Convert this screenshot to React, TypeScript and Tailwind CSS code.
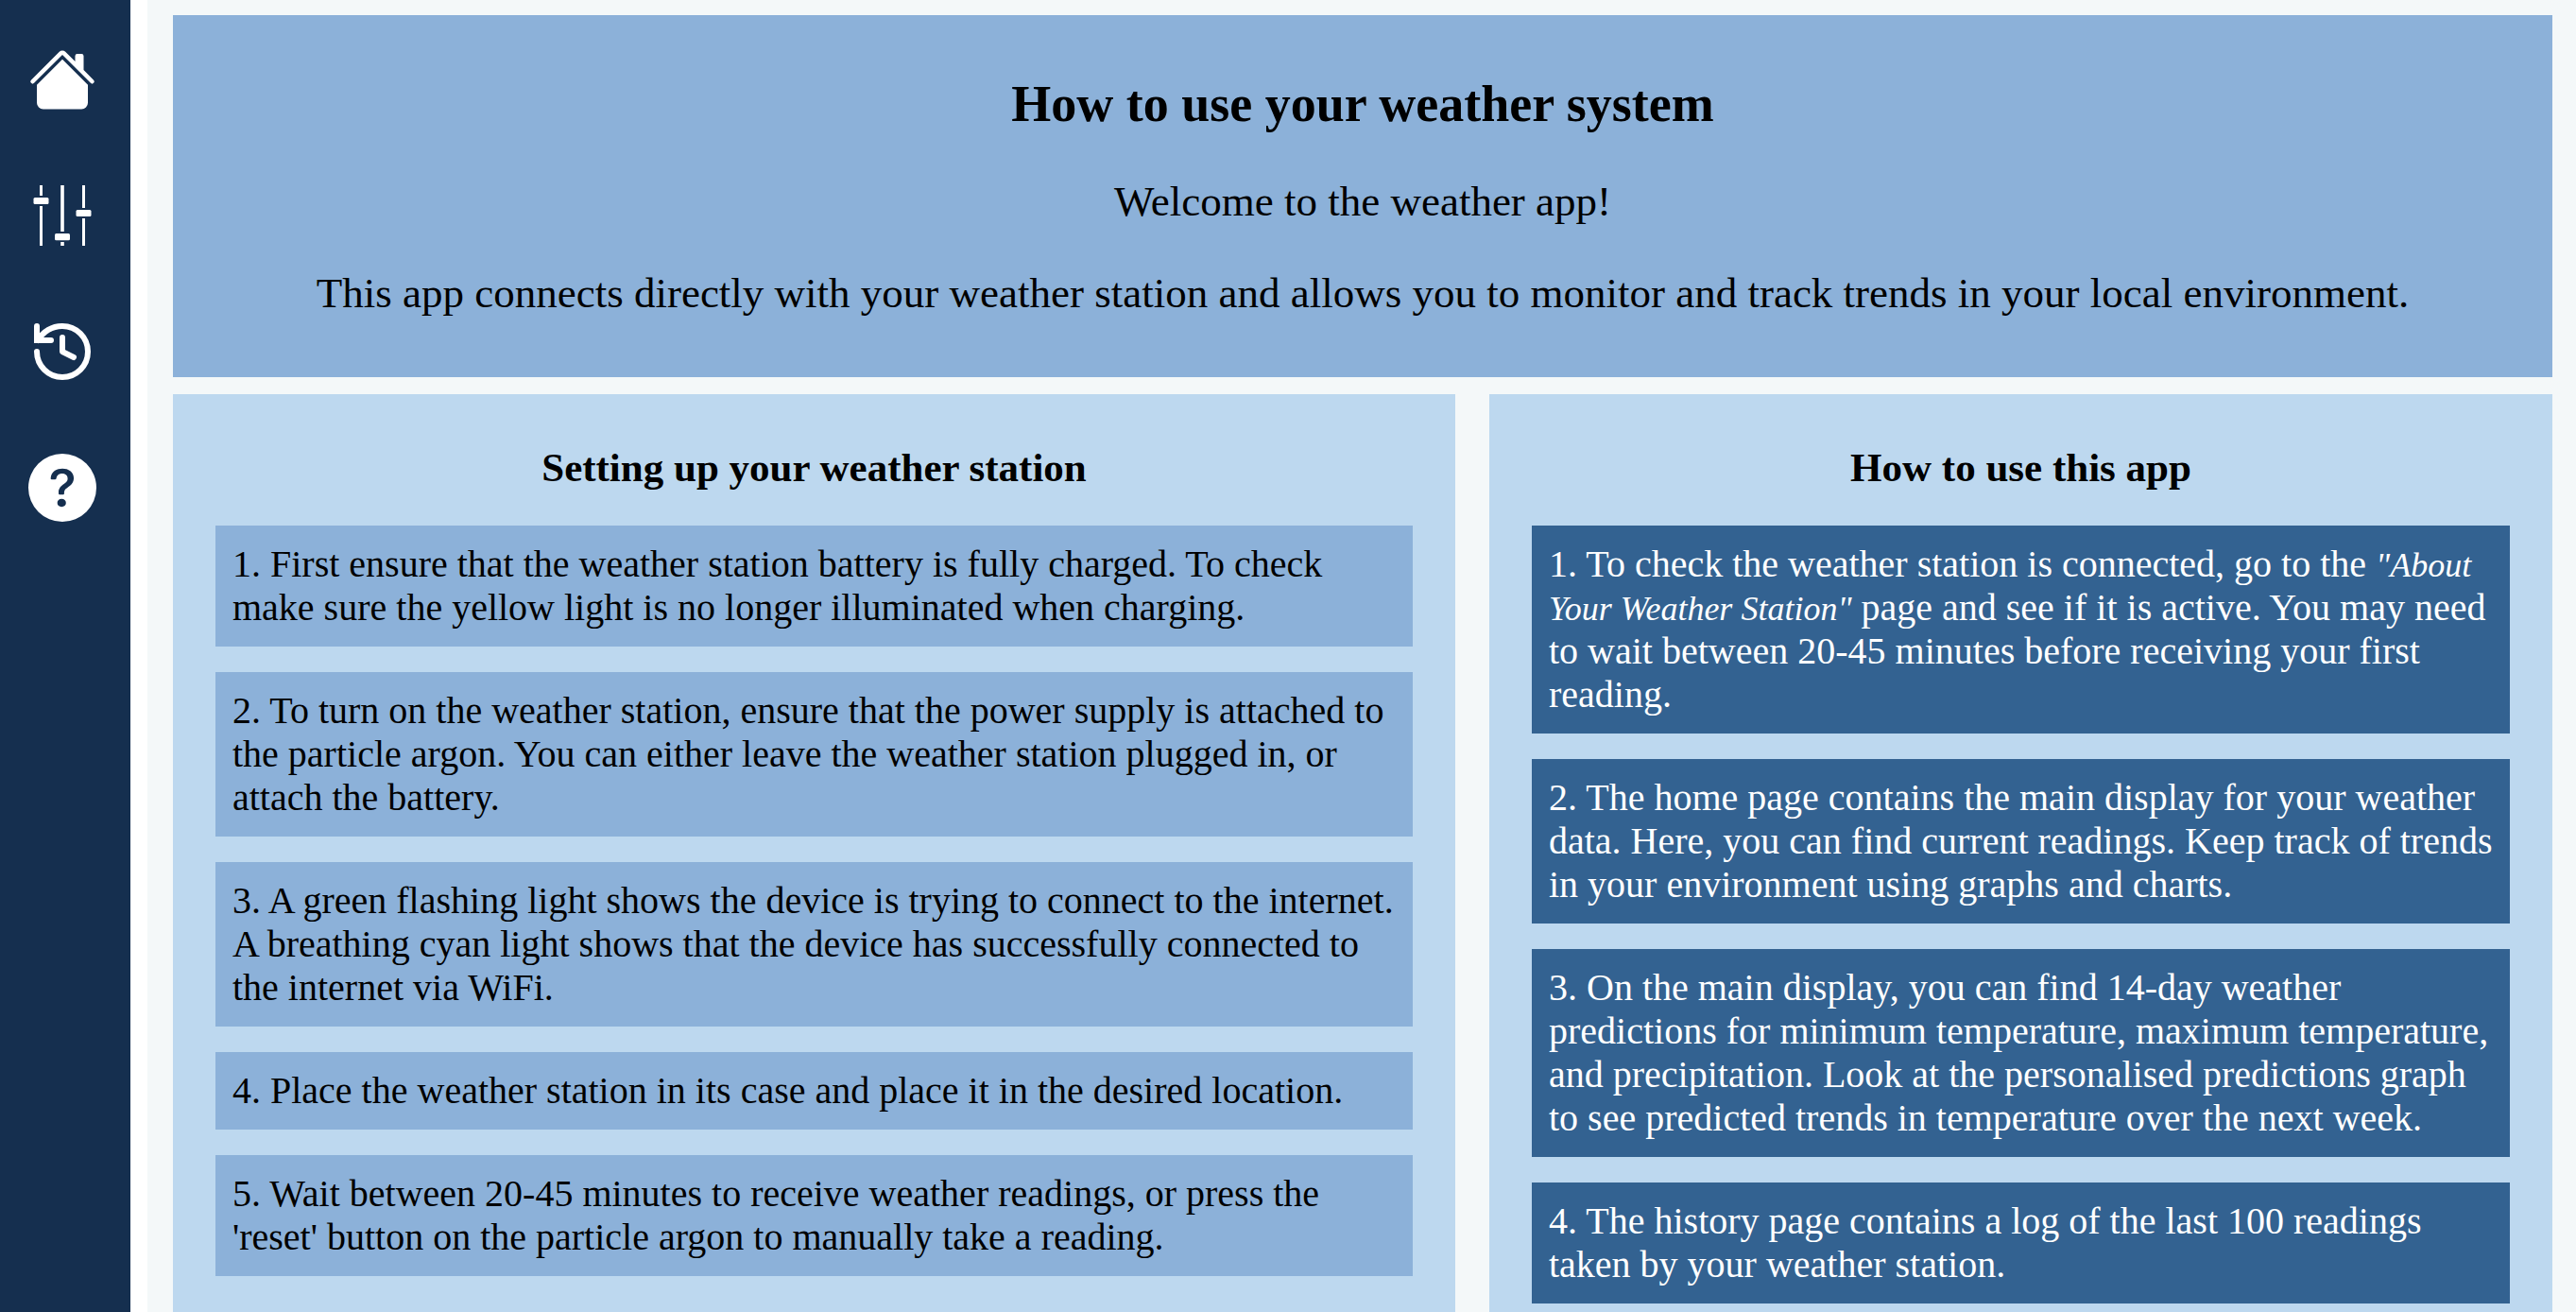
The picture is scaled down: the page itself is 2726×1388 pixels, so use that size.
import type { ReactNode } from "react";
import { BsHouseFill, BsQuestionCircleFill } from "react-icons/bs";

function SlidersIcon() {
  return (
    <svg viewBox="0 0 72 72" className="size-[72px]" fill="currentColor" aria-hidden="true">
      <rect x="12" y="4" width="3" height="11" />
      <rect x="5.5" y="17" width="16" height="7" rx="1.5" />
      <rect x="12" y="26" width="3" height="42" />
      <rect x="34.2" y="4" width="3.6" height="49" />
      <rect x="28" y="55" width="16" height="7.2" rx="1.5" />
      <rect x="34.2" y="64" width="3.6" height="4" />
      <rect x="57" y="4" width="3" height="24" />
      <rect x="50.5" y="30" width="16" height="7" rx="1.5" />
      <rect x="57" y="39" width="3" height="29" />
    </svg>
  );
}

function HistoryIcon() {
  return (
    <svg
      viewBox="0 0 24 24"
      className="size-[72px]"
      fill="none"
      stroke="currentColor"
      strokeWidth="2"
      strokeLinecap="round"
      aria-hidden="true"
    >
      <path d="M12 7v5l4 2" strokeLinejoin="round" />
      <path d="M3 12a9 9 0 1 0 9-9 9.5 9.5 0 0 0-8.5 5" />
      <path d="M3 3v5h5" />
    </svg>
  );
}

const links: { label: string; icon: ReactNode }[] = [
  { label: "Home", icon: <BsHouseFill className="size-[72px]" aria-hidden="true" /> },
  { label: "Settings", icon: <SlidersIcon /> },
  { label: "History", icon: <HistoryIcon /> },
  { label: "Help", icon: <BsQuestionCircleFill className="size-[72px]" aria-hidden="true" /> },
];

const setupSteps: ReactNode[] = [
  "1. First ensure that the weather station battery is fully charged. To check make sure the yellow light is no longer illuminated when charging.",
  "2. To turn on the weather station, ensure that the power supply is attached to the particle argon. You can either leave the weather station plugged in, or attach the battery.",
  "3. A green flashing light shows the device is trying to connect to the internet. A breathing cyan light shows that the device has successfully connected to the internet via WiFi.",
  "4. Place the weather station in its case and place it in the desired location.",
  "5. Wait between 20-45 minutes to receive weather readings, or press the 'reset' button on the particle argon to manually take a reading.",
];

const usageSteps: ReactNode[] = [
  <>
    1. To check the weather station is connected, go to the{" "}
    <em className="text-[36px] leading-none">"About Your Weather Station"</em> page and see if it is
    active. You may need to wait between 20-45 minutes before receiving your first reading.
  </>,
  "2. The home page contains the main display for your weather data. Here, you can find current readings. Keep track of trends in your environment using graphs and charts.",
  "3. On the main display, you can find 14-day weather predictions for minimum temperature, maximum temperature, and precipitation. Look at the personalised predictions graph to see predicted trends in temperature over the next week.",
  "4. The history page contains a log of the last 100 readings taken by your weather station.",
];

function StepPanel({ title, steps, itemClass }: { title: string; steps: ReactNode[]; itemClass: string }) {
  return (
    <section className="bg-[#bdd8ef] px-[45px] pt-[53px] pb-[45px]">
      <h2 className="text-center text-[43px] leading-[50px] font-bold">{title}</h2>
      <ol className="mt-9 flex flex-col gap-[27px]">
        {steps.map((step, i) => (
          <li key={i} className={`p-[18px] text-[40px] leading-[46px] ${itemClass}`}>
            {step}
          </li>
        ))}
      </ol>
    </section>
  );
}

export default function App() {
  return (
    <div className="flex h-screen gap-[18px] bg-white font-['Liberation_Serif',serif] text-black">
      <nav className="w-[138px] shrink-0 bg-[#152f4f] py-12 pl-[30px] text-white">
        <ul className="flex flex-col gap-[72px]">
          {links.map((link) => (
            <li key={link.label}>
              <a href="#" aria-label={link.label} className="block size-[72px]">
                {link.icon}
              </a>
            </li>
          ))}
        </ul>
      </nav>
      <main className="min-w-0 flex-1 overflow-y-auto bg-[#f4f8f9] pt-4 pr-[25px] pl-[27px] [scrollbar-width:none]">
        <header className="bg-[#8cb1d9] px-[45px] pt-[63px] pb-[63px] text-center">
          <h1 className="text-[54px] leading-[62px] font-bold">How to use your weather system</h1>
          <p className="mt-[46px] text-[45px] leading-[52px]">Welcome to the weather app!</p>
          <p className="mt-[45px] text-[45px] leading-[52px]">
            This app connects directly with your weather station and allows you to monitor and track
            trends in your local environment.
          </p>
        </header>
        <div className="mt-[18px] grid grid-cols-[1357fr_1125fr] gap-9">
          <StepPanel title="Setting up your weather station" steps={setupSteps} itemClass="bg-[#8cb1d9]" />
          <StepPanel title="How to use this app" steps={usageSteps} itemClass="bg-[#336291] text-white" />
        </div>
      </main>
    </div>
  );
}
